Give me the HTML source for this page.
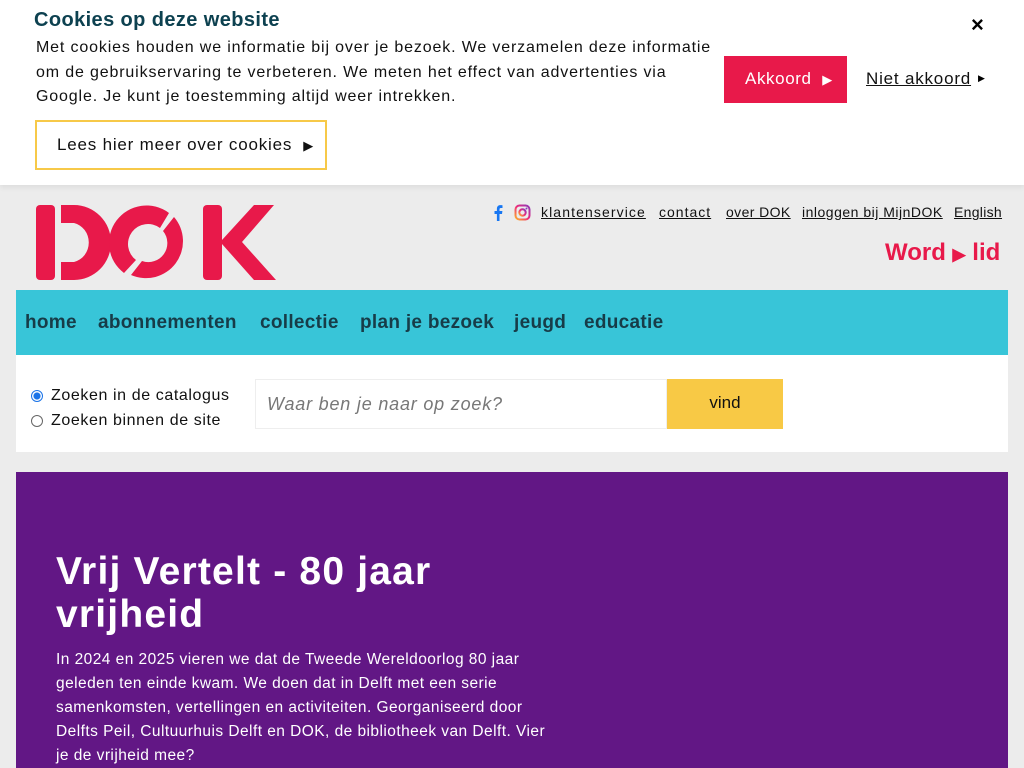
<!DOCTYPE html>
<html><head><meta charset="utf-8"><style>
*{margin:0;padding:0;box-sizing:border-box}
body{width:1024px;height:768px;overflow:hidden;background:#ececec;font-family:"Liberation Sans",sans-serif;position:relative}
.a{position:absolute;white-space:nowrap}
#ck{left:0;top:0;width:1024px;height:185px;background:#fff;box-shadow:0 2px 6px rgba(0,0,0,.08);z-index:2}
#ck h2{position:absolute;left:34px;top:9px;font-size:20px;color:#0d4150;font-weight:bold;letter-spacing:.4px}
#ck p{position:absolute;left:36px;top:36px;font-size:16px;line-height:24.5px;color:#111;letter-spacing:.85px;white-space:nowrap}
.lees{left:35px;top:120px;width:292px;height:50px;border:2px solid #f7c948;font-size:17px;color:#111;padding:13px 0 0 20px;letter-spacing:.8px}
.akk{left:724px;top:56px;width:123px;height:47px;background:#e8194a;color:#fff;font-size:17px;padding:13px 0 0 21px;letter-spacing:.6px}
.niet{left:866px;top:69px;font-size:17px;color:#111;text-decoration:underline;letter-spacing:.8px}
.top{top:204px;font-size:14px;color:#111;text-decoration:underline;letter-spacing:1px}
.nav{left:16px;top:290px;width:992px;height:65px;background:#38c5d8}
.nav span{position:absolute;top:22px;font-size:19px;font-weight:bold;color:#173c48;letter-spacing:.3px}
.srch{left:16px;top:355px;width:992px;height:97px;background:#fff}
.pur{left:16px;top:472px;width:992px;height:296px;background:#621785;color:#fff}
</style></head><body>
<div id="ck" class="a">
<h2>Cookies op deze website</h2>
<p>Met cookies houden we informatie bij over je bezoek. We verzamelen deze informatie<br>om de gebruikservaring te verbeteren. We meten het effect van advertenties via<br>Google. Je kunt je toestemming altijd weer intrekken.</p>
<div class="a lees">Lees hier meer over cookies &nbsp;<span style="font-size:13px">▶</span></div>
<div class="a akk">Akkoord &nbsp;<span style="font-size:13px">▶</span></div>
<div class="a niet">Niet akkoord</div><div class="a" style="left:978px;top:73px;font-size:9px">▶</div>
<div class="a" style="left:971px;top:12px;font-size:22px;font-weight:bold">×</div>
</div>
<svg class="a" style="left:34px;top:204px" width="244" height="77" viewBox="0 0 244 77">
<g fill="#e8194a">
<rect x="2" y="1" width="19" height="75" rx="4"/>
<path d="M27 1 H40 A37 37.5 0 0 1 40 76 H27 V58 H40 A19 20 0 0 0 40 19 H27 Z" />
<path d="M135 9 A37 37 0 0 0 90 69 L102 56 A19 19 0 0 1 126 24 Z"/>
<path d="M97 71 A37 37 0 0 0 140 13 L129 27 A19 19 0 0 1 108 57 Z"/>
<rect x="169" y="1" width="19" height="75" rx="4"/>
<path d="M220 1 H240 L208 38 L242 76 H220 L188 40 V36 Z"/>
</g></svg>
<svg class="a" style="left:493px;top:205px" width="10" height="16" viewBox="0 0 10 16"><path d="M6.5 16V9H9l.4-3H6.5V4.3c0-.8.3-1.3 1.4-1.3H9.5V.3C9.2.2 8.3.1 7.4.1 5.3.1 3.9 1.4 3.9 3.7V6H1.5v3h2.4v7z" fill="#1877f2"/></svg>
<svg class="a" style="left:514px;top:204px" width="17" height="17" viewBox="0 0 17 17"><defs><linearGradient id="g" x1="0" y1="1" x2="1" y2="0"><stop offset="0" stop-color="#fdb32a"/><stop offset=".5" stop-color="#ee2a7b"/><stop offset="1" stop-color="#8a3ab9"/></linearGradient></defs><rect x="1.5" y="1.5" width="14" height="14" rx="4" fill="none" stroke="url(#g)" stroke-width="2"/><circle cx="8.5" cy="8.5" r="3.2" fill="none" stroke="url(#g)" stroke-width="2"/><circle cx="12.5" cy="4.5" r="1" fill="#8a3ab9"/></svg>
<div class="a top" style="left:541px;letter-spacing:1.1px">klantenservice</div>
<div class="a top" style="left:659px">contact</div>
<div class="a top" style="left:726px;letter-spacing:.4px">over DOK</div>
<div class="a top" style="left:802px;letter-spacing:.5px">inloggen bij MijnDOK</div>
<div class="a top" style="left:954px;letter-spacing:.3px">English</div>
<div class="a" style="left:885px;top:239px;font-size:24px;font-weight:bold;color:#e8194a">Word <span style="font-size:17px">▶</span> lid</div>
<div class="a nav"><span style="left:9px">home</span><span style="left:82px">abonnementen</span><span style="left:244px">collectie</span><span style="left:344px">plan je bezoek</span><span style="left:498px">jeugd</span><span style="left:568px">educatie</span></div>
<div class="a srch">
<div class="a" style="left:15px;top:35px;width:12px;height:12px;border-radius:50%;border:1px solid #1a73e8;background:radial-gradient(#1a73e8 45%,#fff 55%)"></div>
<div class="a" style="left:15px;top:60px;width:12px;height:12px;border-radius:50%;border:1px solid #666"></div>
<div class="a" style="left:35px;top:32px;font-size:16px;color:#111;letter-spacing:.6px">Zoeken in de catalogus</div>
<div class="a" style="left:35px;top:57px;font-size:16px;color:#111;letter-spacing:.6px">Zoeken binnen de site</div>
<div class="a" style="left:239px;top:24px;width:412px;height:50px;border:1px solid #eee;font-size:18px;font-style:italic;color:#777;padding:14px 0 0 11px;letter-spacing:.8px">Waar ben je naar op zoek?</div>
<div class="a" style="left:651px;top:24px;width:116px;height:50px;background:#f8c945;font-size:17px;color:#111;text-align:center;padding-top:14px">vind</div>
</div>
<div class="a pur">
<div class="a" style="left:40px;top:78px;font-size:39px;line-height:43px;font-weight:bold;letter-spacing:1.2px">Vrij Vertelt - 80 jaar<br>vrijheid</div>
<div class="a" style="left:40px;top:176px;font-size:15.5px;line-height:24px;letter-spacing:.45px">In 2024 en 2025 vieren we dat de Tweede Wereldoorlog 80 jaar<br>geleden ten einde kwam. We doen dat in Delft met een serie<br>samenkomsten, vertellingen en activiteiten. Georganiseerd door<br>Delfts Peil, Cultuurhuis Delft en DOK, de bibliotheek van Delft. Vier<br>je de vrijheid mee?</div>
</div>
</body></html>
